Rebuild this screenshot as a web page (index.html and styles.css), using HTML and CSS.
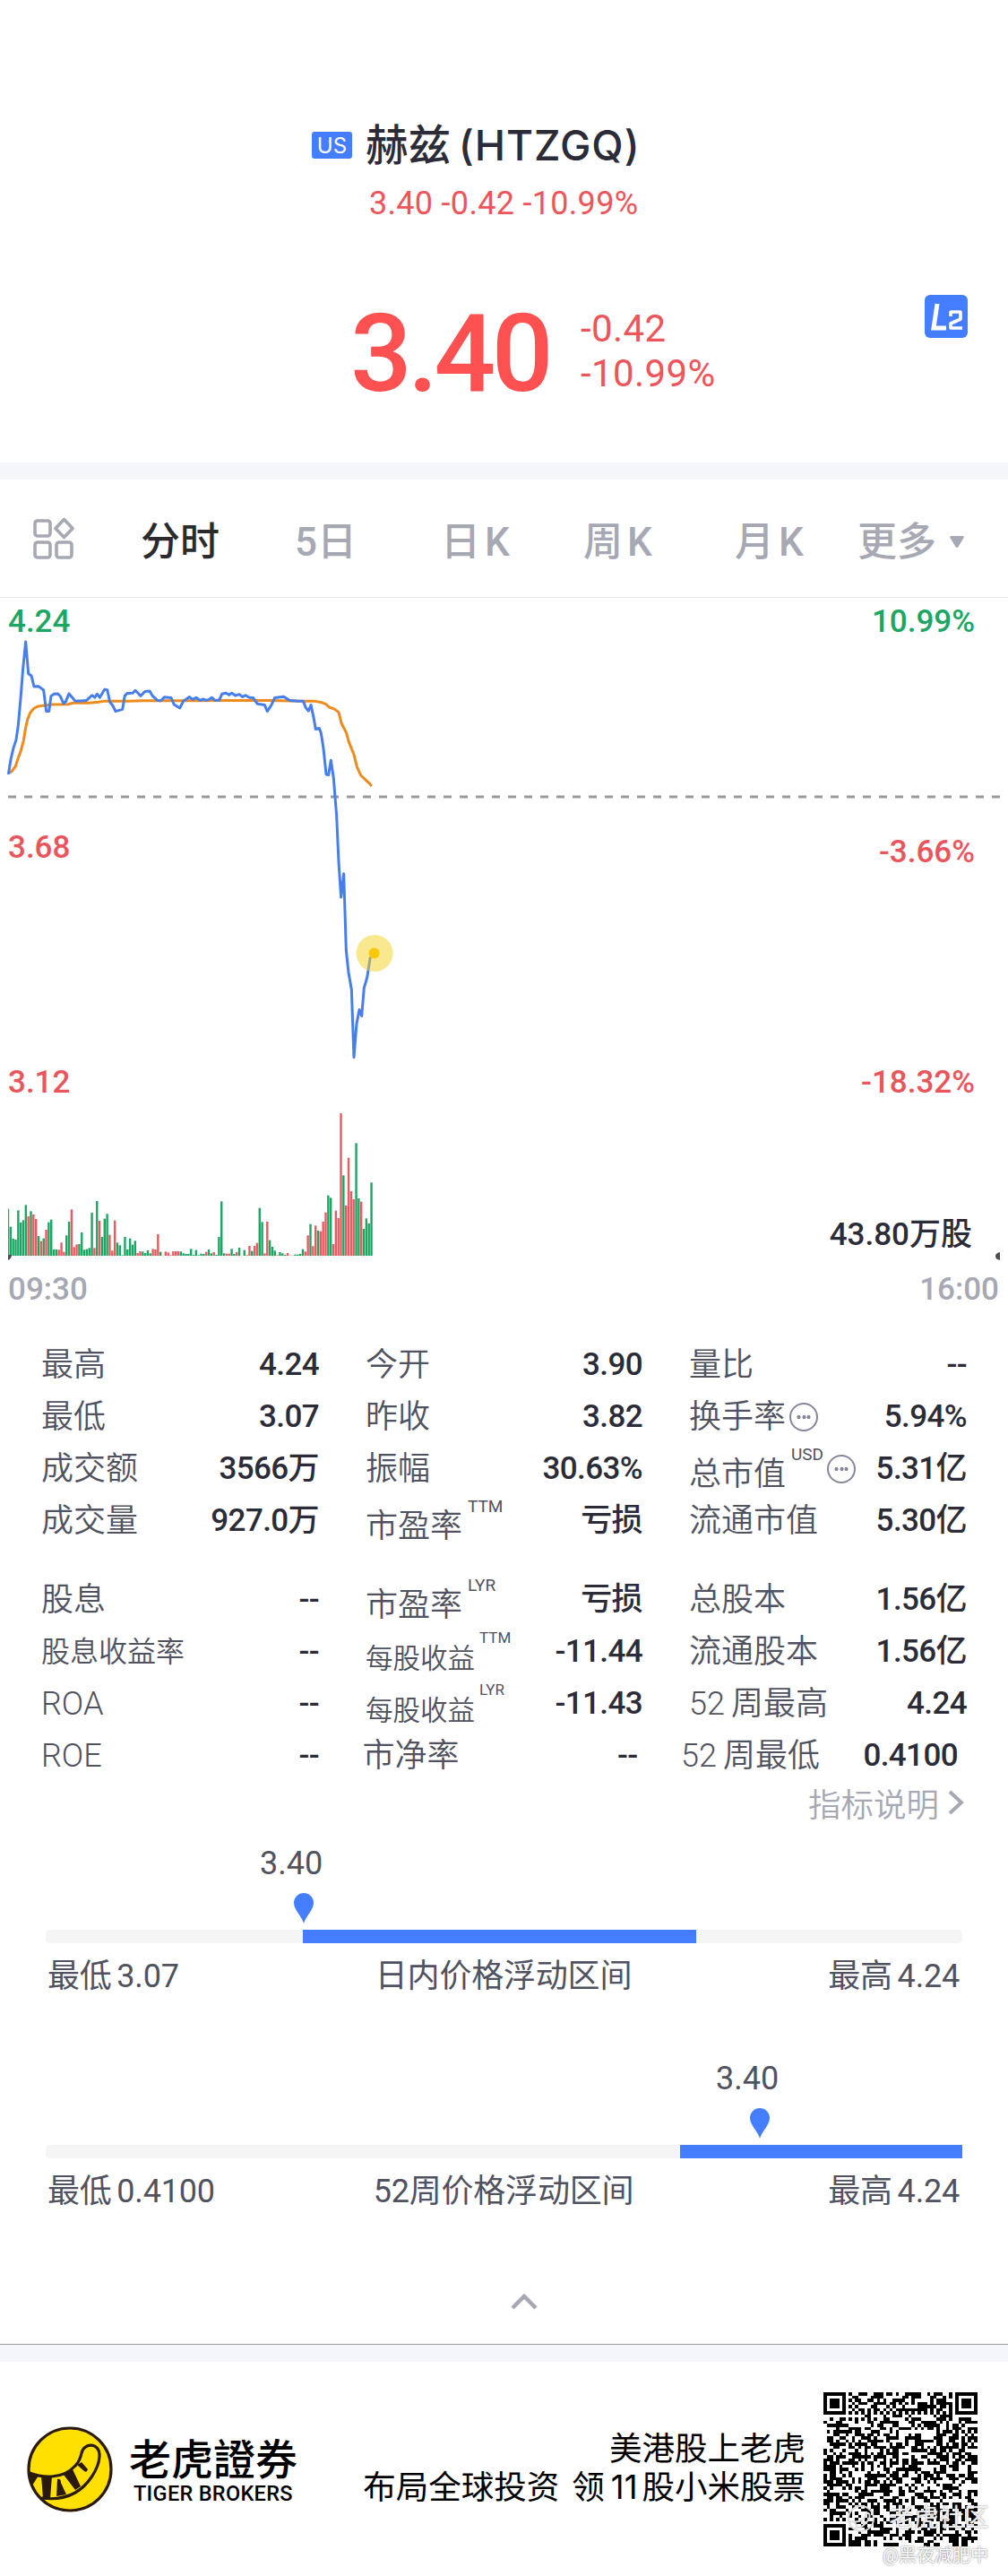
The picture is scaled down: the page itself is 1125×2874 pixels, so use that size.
FILE: index.html
```html
<!DOCTYPE html>
<html lang="zh-CN">
  <head>
    <meta charset="UTF-8" />
    <meta name="viewport" content="width=device-width, initial-scale=1.0" />
    <title>赫兹 (HTZGQ)</title>
    <link rel="stylesheet" href="styles.css">
  </head>
  <body>
    <header class="header">
      <div class="title"><span class="market">US</span><h1>赫兹 <span class="symbol">(HTZGQ)</span></h1></div>
      <div class="subtitle">3.40 -0.42 -10.99%</div>
    </header>

    <section class="quote">
      <div class="price">3.40</div>
      <div class="change">
        <span>-0.42</span>
        <span>-10.99%</span>
      </div>
      <svg class="level2" width="48" height="48" viewBox="0 0 48 48">
        <rect width="48" height="48" rx="6" fill="#447eff"/>
        <path d="M14 10 L10 37 H24" fill="none" stroke="#fff" stroke-width="5"/>
        <path d="M29 24 V19 H40 V27 L29 32 V37 H42" fill="none" stroke="#fff" stroke-width="3.6" stroke-linejoin="round"/>
      </svg>
    </section>

    <nav class="tabs">
      <svg width="46" height="46" viewBox="0 0 46 46" fill="none" stroke="#a6a8b3" stroke-width="3.6">
        <rect x="2" y="3" width="17" height="17" rx="3"/>
        <rect x="2" y="27" width="17" height="17" rx="3"/>
        <rect x="26" y="27" width="17" height="17" rx="3"/>
        <path d="M34.500 1.500 L44 11.500 L34.500 21.500 L25 11.500 Z" stroke-linejoin="round"/>
      </svg>
      <span class="active">分时</span>
      <span>5日</span>
      <span class="k">日K</span>
      <span class="k">周K</span>
      <span class="k">月K</span>
      <span class="more">更多<svg width="18" height="15" viewBox="0 0 18 15"><path d="M3 1 H15 Q18 1 16 4 L10.500 13 Q9 15 7.500 13 L2 4 Q0 1 3 1 Z" fill="#a6a8b3"/></svg></span>
    </nav>

    <svg class="chart" width="1125" height="800" viewBox="0 0 1125 800">
      <path d="M9 222 H1116" stroke="#999" stroke-width="3" stroke-dasharray="9 9"/>
      <!-- average price, then last price -->
      <g transform="translate(0 -7) scale(.33333 .35714)" fill="none" stroke-linejoin="round">
        <path class="line avg" d="M30 566 L38 563 L52 546 L60 522 L70 497 L79 465 L85 430 L92 400 L101 379 L112 366 L125 359 L145 356 L175 353 L228 352 L245 348 L300 348 L330 345 L350 342 L430 342 L480 341 L640 341 L780 340 L900 340 L1010 342 L1050 342 L1075 346 L1090 351 L1104 362 L1120 367 L1134 377 L1143 411 L1160 442 L1168 470 L1185 509 L1195 547 L1208 574 L1225 589 L1238 600 L1244 608"/>
        <path class="line last" d="M28 571 L36 525 L45 489 L54 463 L61 418 L69 335 L77 240 L86 157 L95 256 L105 263 L114 297 L129 296 L138 302 L146 308 L155 374 L164 374 L171 326 L181 320 L193 319 L202 327 L213 350 L220 344 L231 319 L240 329 L252 342 L275 341 L290 340 L308 324 L317 331 L325 320 L334 331 L350 306 L359 307 L368 345 L378 357 L387 374 L410 368 L418 325 L426 318 L444 317 L453 309 L462 317 L471 326 L485 312 L501 311 L510 325 L527 340 L539 341 L550 330 L573 332 L583 353 L602 364 L614 342 L625 335 L634 329 L645 337 L657 331 L670 340 L681 336 L690 340 L700 337 L709 331 L720 340 L734 339 L743 320 L757 317 L767 323 L776 317 L788 325 L801 321 L812 329 L822 324 L835 331 L848 332 L862 351 L886 354 L895 374 L909 354 L920 332 L950 328 L970 340 L1000 342 L1015 342 L1024 363 L1033 373 L1041 354 L1050 393 L1057 430 L1069 427 L1075 442 L1083 490 L1092 571 L1100 573 L1108 527 L1117 584 L1127 700 L1134 844 L1142 955 L1151 881 L1159 1120 L1167 1190 L1177 1243 L1185 1455 L1194 1350 L1203 1306 L1211 1326 L1219 1238 L1229 1206 L1240 1142"/>
      </g>
      <circle cx="418" cy="396.500" r="20.500" fill="#f6d21f" fill-opacity=".5"/>
      <circle cx="417.500" cy="396.500" r="6" fill="#f8c80a"/>
      <g class="labels">
        <text x="9" y="38" class="up">4.24</text>
        <text x="1088" y="38" class="up end">10.99%</text>
        <text x="9" y="290" class="down">3.68</text>
        <text x="1088" y="295" class="down end">-3.66%</text>
        <text x="9" y="552" class="down">3.12</text>
        <text x="1088" y="552" class="down end">-18.32%</text>
        <text x="1085" y="722" class="total end">43.80万股</text>
        <text x="9" y="783" class="time">09:30</text>
        <text x="1115" y="783" class="time end">16:00</text>
      </g>
      <g id="volume"></g>
      <path d="M9 733 H13 Q13 737 9 739 Z M1116 730 V739 Q1111 738 1111 734.500 Q1111 731 1116 730 Z" fill="#4a4b55"/>
    </svg>

    <section class="stats">
      <div class="row">
        <div class="cell"><span class="label">最高</span><b>4.24</b></div>
        <div class="cell"><span class="label">今开</span><b>3.90</b></div>
        <div class="cell"><span class="label">量比</span><b>--</b></div>
      </div>
      <div class="row">
        <div class="cell"><span class="label">最低</span><b>3.07</b></div>
        <div class="cell"><span class="label">昨收</span><b>3.82</b></div>
        <div class="cell"><span class="label">换手率</span><i class="info"></i><b>5.94%</b></div>
      </div>
      <div class="row">
        <div class="cell"><span class="label">成交额</span><b>3566万</b></div>
        <div class="cell"><span class="label">振幅</span><b>30.63%</b></div>
        <div class="cell"><span class="label low">总市值</span><sup>USD</sup><i class="info"></i><b>5.31亿</b></div>
      </div>
      <div class="row">
        <div class="cell"><span class="label">成交量</span><b>927.0万</b></div>
        <div class="cell"><span class="label low">市盈率</span><sup>TTM</sup><b>亏损</b></div>
        <div class="cell"><span class="label">流通市值</span><b>5.30亿</b></div>
      </div>
      <div class="row second">
        <div class="cell"><span class="label">股息</span><b>--</b></div>
        <div class="cell"><span class="label low">市盈率</span><sup>LYR</sup><b>亏损</b></div>
        <div class="cell"><span class="label">总股本</span><b>1.56亿</b></div>
      </div>
      <div class="row">
        <div class="cell"><span class="label medium">股息收益率</span><b>--</b></div>
        <div class="cell"><span class="label low small">每股收益</span><sup class="small">TTM</sup><b>-11.44</b></div>
        <div class="cell"><span class="label">流通股本</span><b>1.56亿</b></div>
      </div>
      <div class="row">
        <div class="cell"><span class="label">ROA</span><b>--</b></div>
        <div class="cell"><span class="label low small">每股收益</span><sup class="small">LYR</sup><b>-11.43</b></div>
        <div class="cell"><span class="label"><span class="num">52</span>周最高</span><b>4.24</b></div>
      </div>
      <div class="row last">
        <div class="cell"><span class="label">ROE</span><b>--</b></div>
        <div class="cell"><span class="label">市净率</span><b>--</b></div>
        <div class="cell"><span class="label"><span class="num">52</span>周最低</span><b>0.4100</b></div>
      </div>
      <a class="explain">指标说明<svg width="20" height="28" viewBox="0 0 20 28"><path d="M3 2 L16 14 L3 26" fill="none" stroke="#a6a8b3" stroke-width="4"/></svg></a>
    </section>

    <section class="range day">
      <div class="marker">
        <span>3.40</span>
        <svg width="22" height="34" viewBox="0 0 22 34"><path d="M11 34 C9 26 0 19 0 11 A11 11 0 0 1 22 11 C22 19 13 26 11 34 Z" fill="#447eff"/></svg>
      </div>
      <div class="bar"><div class="fill"></div></div>
      <div class="legend"><span>最低 3.07</span><span>日内价格浮动区间</span><span>最高 4.24</span></div>
    </section>

    <section class="range year">
      <div class="marker">
        <span>3.40</span>
        <svg width="22" height="34" viewBox="0 0 22 34"><path d="M11 34 C9 26 0 19 0 11 A11 11 0 0 1 22 11 C22 19 13 26 11 34 Z" fill="#447eff"/></svg>
      </div>
      <div class="bar"><div class="fill"></div></div>
      <div class="legend"><span>最低 0.4100</span><span>52周价格浮动区间</span><span>最高 4.24</span></div>
    </section>

    <div class="collapse">
      <svg width="30" height="20" viewBox="0 0 30 20"><path d="M2 17 L15 4 L28 17" fill="none" stroke="#a6a8b3" stroke-width="4.500"/></svg>
    </div>

    <footer class="footer">
      <svg class="logo" width="96" height="96" viewBox="0 0 96 96">
        <circle cx="48" cy="48" r="46" fill="#ffe000"/>
        <g fill="#2a1a0e">
          <path d="M3 53 L13 55 L6 66 Z"/>
          <path d="M16 55 L28 55 L26 81 L18 81 Z"/>
          <path d="M34 59 Q38 58 38 63 L44 76 L33 78 Z"/>
          <path d="M41 54 L51 48 L60 67 L54 71 Z"/>
          <path d="M56 43 L61 40 L68 48 Q67 52 64 50 Z"/>
        </g>
        <g fill="none" stroke="#2a1a0e" stroke-width="3.200">
          <path d="M3 52 Q16 57 28 56 Q44 55 54 44 Q59 39 61 30 C63 18 82 17 81 34 C80 48 68 66 54 74 Q38 83 16 80"/>
          <circle cx="48" cy="48" r="46"/>
        </g>
      </svg>
      <div class="brand">
        <strong>老虎證券</strong>
        <span>TIGER BROKERS</span>
      </div>
      <p class="slogan">美港股上老虎<br>布局全球投资 领<span>11</span>股小米股票</p>
      <div class="qr">
        <svg id="qr" width="172" height="172" viewBox="0 0 49 49" shape-rendering="crispEdges"></svg>
        <div class="watermark">
          <svg width="32" height="32" viewBox="0 0 32 32" fill="none" stroke="#ddd" stroke-width="2"><circle cx="16" cy="16" r="14"/><path d="M3 19 Q19 22 22 10 Q27 9 25 16 Q20 26 8 27 M9 20 L12 26 M16 17 L19 22"/></svg>
          <span>老虎社区</span>
        </div>
        <div class="author">@黑夜减肥中</div>
      </div>
    </footer>
    <script src="main.js"></script>
  </body>
</html>
```

FILE: styles.css
```css
body {
  margin: 0;
  width: 1125px;
  background: #fff;
  color: #2b2c38;
  font-family: Roboto, "Noto Sans CJK SC", sans-serif;
}

.header {
  height: 262px;
  box-sizing: border-box;
  padding-top: 132px;
}

.title {
  display: flex;
  align-items: center;
  height: 60px;
  padding-left: 348px;
}

.market {
  width: 45px;
  height: 30px;
  margin-right: 15px;
  border-radius: 3px;
  background: #447eff;
  color: #fff;
  font: 24px/31px Inter, sans-serif;
  text-align: center;
}

h1 {
  margin: 0;
  font-size: 47.500px;
  line-height: 60px;
  font-weight: 500;
  white-space: nowrap;
}

.symbol {
  margin-left: -3px;
  font-family: Inter, sans-serif;
  font-size: 46px;
  letter-spacing: 1px;
}

.subtitle {
  padding-left: 412px;
  margin-top: 14px;
  line-height: 42px;
  font-size: 36px;
  letter-spacing: 0.3px;
  color: #ee555b;
}

.quote {
  display: flex;
  height: 254px;
  color: #fd5050;
  border-bottom: 19px solid #f5f6fa;
}

.price {
  width: 257px;
  padding: 62px 0 0 391px;
  font-size: 121px;
  line-height: 142px;
  font-weight: 500;
  letter-spacing: -4.500px;
}

.change {
  display: flex;
  flex-direction: column;
  width: 384px;
  padding-top: 80px;
  font-size: 42px;
  line-height: 50px;
  letter-spacing: 0.4px;
  color: #ee555b;
}

.level2 {
  margin-top: 67px;
}

.tabs {
  display: grid;
  grid-template-columns: 120px 172px 163px 159px 169px 137px auto;
  align-items: center;
  height: 131px;
  padding: 0 30px 0 37px;
  border-bottom: 1px solid #e6e6e8;
  font-size: 44px;
  font-weight: 500;
  color: #a6a8b3;
}

.tabs span {
  white-space: nowrap;
}

.tabs .k {
  letter-spacing: 5px;
}

.tabs .active {
  color: #2b2b2e;
}

.more svg {
  margin-left: 14px;
  vertical-align: 8px;
}

.chart {
  display: block;
}

.line {
  stroke-width: 3;
  vector-effect: non-scaling-stroke;
}

.avg { stroke: #ee8b1c; }
.last.line { stroke: #477eee; }

.labels {
  font-size: 35px;
  font-weight: 500;
}

.end { text-anchor: end; }
.up { fill: #1ba663; }
.down { fill: #ea555b; }
.time { fill: #a6a8b3; }
.total { fill: #2b2c38; }

.stats {
  height: 564px;
  padding: 27px 46px 0;
}

.row {
  display: grid;
  grid-template-columns: 310px 309px 310px;
  column-gap: 52px;
  height: 58px;
}

.row.second {
  margin-top: 30px;
}

.row.last {
  grid-template-columns: 310px 307px 309px;
  column-gap: 48.500px;
}

.cell {
  display: flex;
  align-items: center;
  height: 58px;
  white-space: nowrap;
  line-height: 42px;
}

.label {
  font-size: 36px;
  font-weight: 350;
  color: #50525f;
}

.label.low {
  padding-top: 12px;
}

.label.medium {
  font-size: 32px;
}

.label.small {
  font-size: 30.500px;
  padding-top: 15px;
}

.num {
  margin-right: 7px;
}

.cell b {
  margin-left: auto;
  font-size: 35px;
  font-weight: 500;
  letter-spacing: -0.6px;
}

.cell sup {
  align-self: flex-start;
  margin: 3px 0 0 6px;
  font-size: 19px;
  line-height: 20px;
  color: #50525f;
}

.cell sup.small {
  margin-left: 5px;
  font-size: 17px;
}

.info {
  width: 28px;
  height: 28px;
  margin-left: 4px;
  border: 2px solid #85879a;
  border-radius: 50%;
  background: radial-gradient(circle, #85879a 1.800px, transparent 2.300px) 50% 50% / 7px 28px no-repeat,
    radial-gradient(circle, #85879a 1.800px, transparent 2.300px) 25% 50% / 7px 28px no-repeat,
    radial-gradient(circle, #85879a 1.800px, transparent 2.300px) 75% 50% / 7px 28px no-repeat;
}

.explain {
  display: flex;
  justify-content: flex-end;
  align-items: center;
  gap: 9px;
  height: 46px;
  margin-right: 2px;
  font-size: 36.500px;
  font-weight: 350;
  color: #a6a8b3;
}

.range {
  width: 1023px;
  height: 240px;
  margin-left: 51px;
  font-size: 36px;
  color: #50525f;
}

.marker {
  display: flex;
  flex-direction: column;
  width: 66px;
  height: 95px;
}

.marker span {
  margin-bottom: 12px;
  line-height: 42px;
}

.marker svg {
  margin-left: 38px;
}

.day .marker { margin-left: 239px; }
.year .marker { margin-left: 748px; }

.bar {
  height: 15px;
  border-radius: 5px;
  background: #f5f5f5;
}

.fill {
  height: 15px;
  background: #447eff;
}

.day .fill { margin-left: 287px; width: 439px; }
.year .fill { margin-left: 708px; width: 315px; }

.legend {
  display: grid;
  grid-template-columns: 1fr auto 1fr;
  padding: 10px 3px 0 2px;
  line-height: 54px;
  word-spacing: -3px;
  letter-spacing: -0.2px;
}

.legend span:last-child {
  text-align: right;
}

.collapse {
  height: 78px;
  padding: 20px 0 0 570px;
  box-sizing: border-box;
}

.footer {
  display: flex;
  height: 239px;
  border-top: 19px solid #f5f6fa;
  box-shadow: 0 -1px #999;
  color: #000;
}

.logo {
  margin: 72px 18px 0 30px;
}

.brand {
  display: flex;
  flex-direction: column;
  width: 190px;
  padding-top: 78px;
}

.brand strong {
  font: 500 47px/56px "Noto Sans CJK TC", sans-serif;
  white-space: nowrap;
}

.brand span {
  margin-left: 5px;
  font-size: 23.500px;
  font-weight: 500;
  line-height: 27px;
  letter-spacing: 0.3px;
}

.slogan {
  width: 565px;
  margin: 77px 0 0;
  text-align: right;
  font-size: 36.500px;
  line-height: 42px;
  word-spacing: 5px;
  white-space: nowrap;
}

.slogan span {
  margin: 0 5px 0 7px;
  font-family: Inter, sans-serif;
}

.qr {
  position: relative;
  margin: 34px 0 0 20px;
}

.watermark {
  position: absolute;
  left: 26px;
  top: 124px;
  display: flex;
  align-items: center;
  gap: 15px;
  color: rgba(255, 255, 255, 0.9);
  text-shadow: 0 0 2px #777;
  font-size: 28px;
  line-height: 34px;
  white-space: nowrap;
}

.author {
  position: absolute;
  left: 66px;
  top: 167px;
  color: #fff;
  text-shadow: 0 0 2px #555;
  font-size: 20px;
  line-height: 30px;
  white-space: nowrap;
}
```

FILE: main.js
```js
// one bar per minute, positive closes up, negative closes down
const volume = [
  157, 97, 57, 54, 152, 111, 119, 170, -132, 149, -138, -123, 66, -49, 58, -87, 112, 121, 21, 21,
  -20, -44, -13, 68, 114, -155, -29, -38, 39, 78, 20, 22, 26, 144, -26, 183, -117, 63, 124, 140,
  -70, -17, -118, 44, 35, 2, 63, 21, 58, 37, 50, -9, -15, 14, 9, 18, 8, -23, -21, -72,
  13, 0, -14, -11, -2, -15, -15, -15, 14, 8, 6, 6, 23, 3, 19, 2, 7, 6, -13, 21,
  8, -12, 3, 63, 182, 8, -7, -7, 23, 6, -12, 27, 0, 19, -2, -33, 16, -33, -43, 160,
  113, -8, -114, 52, 30, 17, -2, 12, 8, 3, -9, -1, -1, 4, 4, 6, 22, -14, -68, 106,
  -32, -101, 84, -82, -114, -145, 202, 194, -39, -151, -126, -477, 269, -168, -328, -216, -189, 377, 192, -181,
  90, 125, 108, 245
];

let bars = '';
volume.forEach((v, i) => {
  const h = Math.abs(v) / 3;
  const x = i === 0 ? 9 : 7.8 + i * 2.836;
  bars += `<rect x="${x}" y="${734 - h}" width="${i === 0 ? 1.2 : 2.4}" height="${h}" fill="${v < 0 ? '#ea5a60' : '#1ba663'}"/>`;
});
document.getElementById('volume').innerHTML = bars;

const N = 49;
let seed = 20200609;
const rand = () => {
  seed = (seed * 1103515245 + 12345) % 2147483648;
  return seed / 2147483648;
};

function finder(x, y) {
  if (x < 0 || y < 0 || x > 6 || y > 6) return 0;
  const d = Math.max(Math.abs(x - 3), Math.abs(y - 3));
  return d === 2 ? 0 : 1;
}

let cells = '';
for (let y = 0; y < N; y++) {
  for (let x = 0; x < N; x++) {
    let on = rand() > 0.48;
    if (x < 8 && y < 8) on = finder(x, y);
    else if (x > N - 9 && y < 8) on = finder(x - N + 7, y);
    else if (x < 8 && y > N - 9) on = finder(x, y - N + 7);
    else if (x === 6 || y === 6) on = (x + y) % 2 === 0;
    if (on) cells += `M${x} ${y}h1v1h-1z`;
  }
}
document.getElementById('qr').innerHTML = `<path d="${cells}"/>`;
```
